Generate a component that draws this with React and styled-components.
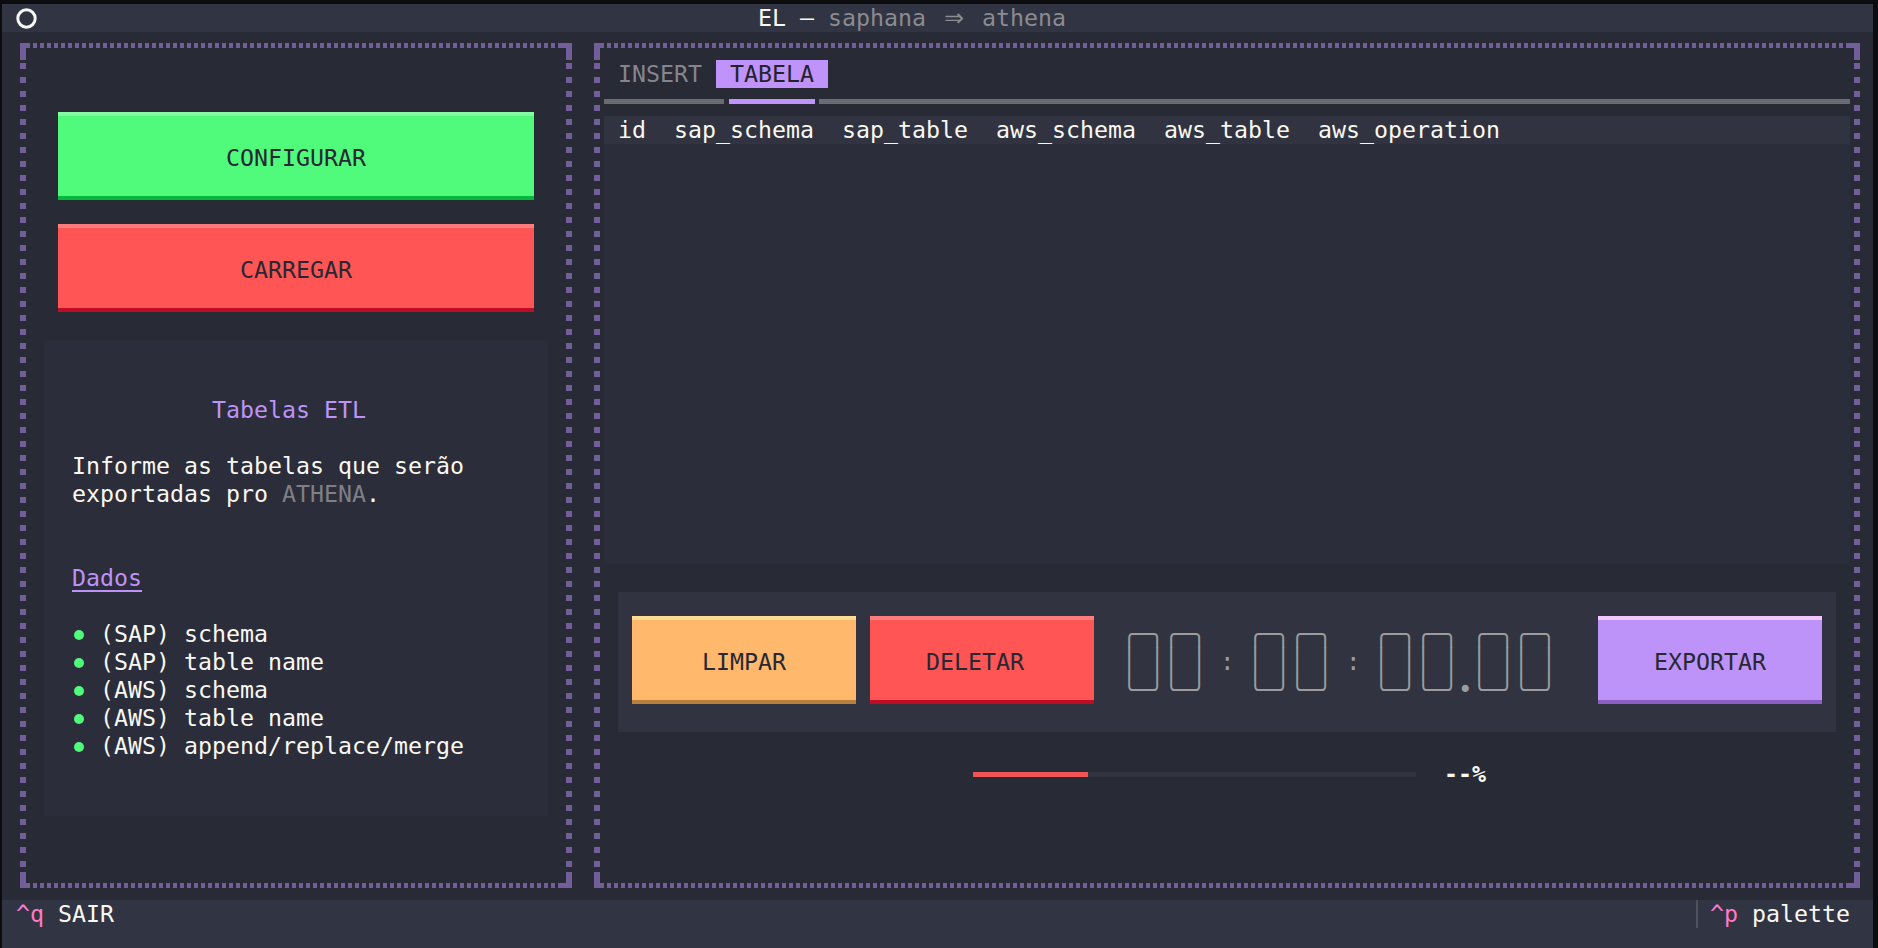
import React from 'react';
import styled, { createGlobalStyle } from 'styled-components';

const FONT = `"DejaVu Sans Mono", "Liberation Mono", monospace`;
const BORDER = '#725e98';

const Global = createGlobalStyle`
  html, body { margin: 0; padding: 0; background: #0c0c0e; }
  body {
    font-family: ${FONT};
    font-size: 23.25px;
    line-height: 28px;
    color: #f8f8f2;
  }
  * { box-sizing: border-box; }
`;

const solid = `linear-gradient(${BORDER}, ${BORDER})`;
const hdash = `repeating-linear-gradient(to right, transparent 0 3px, ${BORDER} 3px 7px)`;
const vdash = `repeating-linear-gradient(to bottom, transparent 0 3px, ${BORDER} 3px 9px, transparent 9px 14px)`;

const Frame = styled.div`
  width: 1878px;
  height: 948px;
  padding: 4px 5px 0 2px;
  overflow: hidden;
`;

const Screen = styled.div`
  height: 944px;
  background: #282a36;
  display: flex;
  flex-direction: column;
`;

const Header = styled.header`
  height: 28px;
  flex: none;
  background: #313442;
  display: flex;
  align-items: center;
  white-space: pre;
`;

const HeaderIcon = styled.svg`
  flex: none;
  margin-left: 14px;
  display: block;
`;

const Title = styled.div`
  margin-left: 721px;
  color: #f8f8f2;
`;

const SubTitle = styled.span`
  color: #8b8b90;
`;

const Arrow = styled.span`
  display: inline-block;
  width: 28px;
  text-align: center;
  font-family: "DejaVu Sans", sans-serif;
  font-size: 24px;
`;

const Body = styled.main`
  height: 868px;
  flex: none;
  display: flex;
  gap: 14px;
  padding-left: 14px;
`;

const Panel = styled.section`
  width: ${(p) => p.$cols * 14}px;
  height: 100%;
  flex: none;
  display: flex;
  flex-direction: column;
  align-items: ${(p) => p.$align || 'stretch'};
  padding: ${(p) => p.$pad};
  background-repeat: no-repeat;
  background-image:
    ${hdash}, ${hdash}, ${vdash}, ${vdash},
    ${solid}, ${solid}, ${solid}, ${solid},
    ${solid}, ${solid}, ${solid}, ${solid};
  background-position:
    left 14px top 11px,
    left 14px bottom 12px,
    left 4px top 28px,
    right 4px top 28px,
    left 4px top 11px,
    left 4px top 11px,
    right 4px top 11px,
    right 4px top 11px,
    left 4px bottom 12px,
    left 4px bottom 12px,
    right 4px bottom 12px,
    right 4px bottom 12px;
  background-size:
    calc(100% - 28px) 5px,
    calc(100% - 28px) 5px,
    6px calc(100% - 56px),
    6px calc(100% - 56px),
    10px 5px,
    6px 17px,
    10px 5px,
    6px 17px,
    10px 5px,
    6px 16px,
    10px 5px,
    6px 16px;
`;

const TermButton = styled.button`
  appearance: none;
  width: ${(p) => p.$cols * 14}px;
  height: 88px;
  flex: none;
  margin: ${(p) => p.$margin || '0'};
  border: 0;
  border-radius: 0;
  border-top: 4px solid ${(p) => p.$light};
  border-bottom: 4px solid ${(p) => p.$dark};
  background: ${(p) => p.$bg};
  color: #272834;
  font: inherit;
  line-height: 28px;
  padding: 4px ${(p) => (p.$nudge ? 14 : 0)}px 0 0;
  display: flex;
  align-items: center;
  justify-content: center;
  white-space: pre;
  cursor: pointer;
`;

const InfoBox = styled.div`
  width: 504px;
  height: 476px;
  flex: none;
  margin-top: 28px;
  background: #2b2d3a;
  padding: 56px 28px 0;
`;

const InfoTitle = styled.h2`
  margin: 0 0 28px;
  font: inherit;
  color: #bd93f9;
  text-align: center;
  padding-right: 14px;
`;

const Para = styled.p`
  margin: 0 0 56px;
  color: #f8f8f2;
`;

const Muted = styled.span`
  color: #7f7f84;
`;

const Link = styled.a`
  display: inline-block;
  margin-bottom: 28px;
  color: #bd93f9;
  text-decoration: underline;
  text-underline-offset: 4px;
  text-decoration-thickness: 2px;
`;

const List = styled.ul`
  list-style: none;
  margin: 0;
  padding: 0;
`;

const Item = styled.li`
  display: flex;
  height: 28px;
  white-space: pre;
`;

const Bullet = styled.span`
  width: 28px;
  flex: none;
  display: flex;
  align-items: center;
  padding-left: 2px;
  &::before {
    content: '';
    width: 10px;
    height: 10px;
    margin-top: 2px;
    border-radius: 50%;
    background: #50fa7b;
  }
`;

const TabRow = styled.div`
  height: 28px;
  flex: none;
  display: flex;
`;

const Tab = styled.div`
  padding: 0 14px;
  white-space: pre;
  color: ${(p) => (p.$active ? '#22232d' : '#85858c')};
  background: ${(p) => (p.$active ? '#bf93f9' : 'transparent')};
`;

const TabRule = styled.div`
  height: 28px;
  flex: none;
  display: flex;
  align-items: flex-start;
  padding-top: 11px;
`;

const RuleSeg = styled.div`
  height: 5px;
  flex: ${(p) => (p.$w ? 'none' : '1')};
  width: ${(p) => (p.$w ? `${p.$w}px` : 'auto')};
  margin-left: ${(p) => p.$ml || 0}px;
  background: ${(p) => p.$color};
`;

const Table = styled.div`
  height: 448px;
  flex: none;
  background: #2b2d3a;
`;

const HeadRow = styled.div`
  height: 28px;
  display: flex;
  background: #313340;
`;

const HeadCell = styled.div`
  padding: 0 14px;
  white-space: pre;
  color: #f8f8f2;
`;

const ControlBar = styled.div`
  height: 140px;
  flex: none;
  margin: 28px 14px 0;
  padding: 24px 14px 0;
  background: #313340;
  display: flex;
  align-items: flex-start;
  gap: 14px;
`;

const DigitsBox = styled.div`
  margin: 4px 0 0 14px;
  width: 434px;
  color: #9c9c9f;
  flex: none;
  font-size: 24.1px;
  letter-spacing: -0.51px;
`;

const DigitLine = styled.div`
  height: 28px;
  line-height: 28px;
  white-space: pre;
`;

const Spacer = styled.div`
  flex: 1;
`;

const ProgressRow = styled.div`
  height: 28px;
  flex: none;
  margin-top: 28px;
  padding-left: 252px;
  display: flex;
  align-items: center;
`;

const Bar = styled.div`
  width: 560px;
  height: 5px;
  display: flex;
`;

const BarPart = styled.div`
  height: 100%;
  flex: ${(p) => (p.$w ? 'none' : '1')};
  width: ${(p) => (p.$w ? `${p.$w}px` : 'auto')};
  background: ${(p) => p.$color};
`;

const Percent = styled.div`
  width: 70px;
  text-align: right;
  font-weight: bold;
  color: #f8f8f2;
`;

const Footer = styled.footer`
  flex: 1;
  background: #313442;
  display: flex;
  align-items: flex-start;
  white-space: pre;
`;

const FooterKey = styled.div`
  display: flex;
  gap: 14px;
  padding: ${(p) => (p.$palette ? '0 23px 0 12px' : '0 14px')};
  margin-left: ${(p) => (p.$palette ? 'auto' : '0')};
  border-left: ${(p) => (p.$palette ? '2px solid #4f5160' : 'none')};
  height: 28px;
`;

const Key = styled.span`
  color: #ff79c6;
`;

const GLYPHS = {
  '0': ['╭─╮', '│ │', '╰─╯'],
  ':': ['   ', ' : ', '   '],
  '.': [' ', ' ', '•'],
};

function Digits({ value }) {
  const rows = [0, 1, 2].map((i) =>
    [...value].map((ch) => GLYPHS[ch][i]).join('')
  );
  return (
    <DigitsBox>
      {rows.map((r, i) => (
        <DigitLine key={i}>{r}</DigitLine>
      ))}
    </DigitsBox>
  );
}

const BTN = {
  green: { $bg: '#50fa7b', $light: '#85fca2', $dark: '#03b83a' },
  red: { $bg: '#ff5555', $light: '#ff7d7d', $dark: '#c00d27' },
  orange: { $bg: '#ffb86c', $light: '#ffdc8f', $dark: '#b8803a' },
  purple: { $bg: '#bd93f9', $light: '#f3c6ff', $dark: '#8a5ec2' },
};

const columns = ['id', 'sap_schema', 'sap_table', 'aws_schema', 'aws_table', 'aws_operation'];
const fields = [
  '(SAP) schema',
  '(SAP) table name',
  '(AWS) schema',
  '(AWS) table name',
  '(AWS) append/replace/merge',
];

export default function App() {
  return (
    <>
      <Global />
      <Frame>
        <Screen>
          <Header>
            <HeaderIcon width="21" height="21" viewBox="0 0 21 21">
              <circle cx="10.5" cy="10.5" r="8.7" fill="none" stroke="#f8f8f2" strokeWidth="3" />
            </HeaderIcon>
            <Title>
              EL — <SubTitle>saphana <Arrow>⇒</Arrow> athena</SubTitle>
            </Title>
          </Header>

          <Body>
            <Panel $cols={40} $align="center" $pad="80px 0 0">
              <TermButton $cols={34} {...BTN.green}>CONFIGURAR</TermButton>
              <TermButton $cols={34} $margin="24px 0 0" {...BTN.red}>CARREGAR</TermButton>
              <InfoBox>
                <InfoTitle>Tabelas ETL</InfoTitle>
                <Para>
                  Informe as tabelas que serão exportadas pro <Muted>ATHENA</Muted>.
                </Para>
                <Link>Dados</Link>
                <List>
                  {fields.map((f) => (
                    <Item key={f}>
                      <Bullet />
                      {f}
                    </Item>
                  ))}
                </List>
              </InfoBox>
            </Panel>

            <Panel $cols={91} $pad="28px 14px 0">
              <TabRow>
                <Tab>INSERT</Tab>
                <Tab $active>TABELA</Tab>
              </TabRow>
              <TabRule>
                <RuleSeg $w={120} $color="#6b6b73" />
                <RuleSeg $w={86} $ml={5} $color="#bf93f9" />
                <RuleSeg $ml={4} $color="#6b6b73" />
              </TabRule>
              <Table>
                <HeadRow>
                  {columns.map((c) => (
                    <HeadCell key={c}>{c}</HeadCell>
                  ))}
                </HeadRow>
              </Table>
              <ControlBar>
                <TermButton $cols={16} {...BTN.orange}>LIMPAR</TermButton>
                <TermButton $cols={16} $nudge {...BTN.red}>DELETAR</TermButton>
                <Digits value="00:00:00.00" />
                <Spacer />
                <TermButton $cols={16} {...BTN.purple}>EXPORTAR</TermButton>
              </ControlBar>
              <ProgressRow>
                <Bar>
                  <BarPart $w={117} $color="transparent" />
                  <BarPart $w={115} $color="#f25454" />
                  <BarPart $color="#313340" />
                </Bar>
                <Percent>--%</Percent>
              </ProgressRow>
            </Panel>
          </Body>

          <Footer>
            <FooterKey>
              <Key>^q</Key>
              <span>SAIR</span>
            </FooterKey>
            <FooterKey $palette>
              <Key>^p</Key>
              <span>palette</span>
            </FooterKey>
          </Footer>
        </Screen>
      </Frame>
    </>
  );
}
